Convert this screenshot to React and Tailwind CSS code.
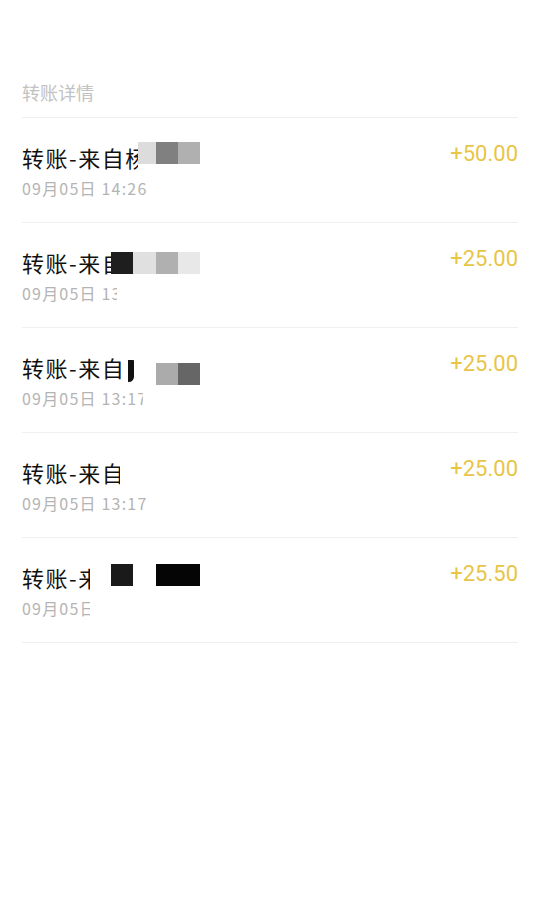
import React from "react";

const rows = [
	{
		title: "转账-来自杨",
		titleW: "w-[116px]",
		date: "09月05日 14:26",
		dateW: "w-[130px]",
		amount: "+50.00",
		mosaicPos: "-top-[4px]",
		mosaic: ["w-[18px] bg-[#dcdcdc]", "w-[22px] bg-[#808080]", "w-[22px] bg-[#b0b0b0]"],
	},
	{
		title: "转账-来自",
		titleW: "w-[89px]",
		date: "09月05日 13:",
		dateW: "w-[95px]",
		amount: "+25.00",
		mosaicPos: "top-[1px]",
		mosaic: [
			"w-[22px] bg-[#1e1e1e]",
			"w-[23px] bg-[#e0e0e0]",
			"w-[22px] bg-[#b0b0b0]",
			"w-[22px] bg-[#e8e8e8]",
		],
	},
	{
		title: "转账-来自",
		titleW: "w-[106px]",
		date: "09月05日 13:17",
		dateW: "w-[121px]",
		amount: "+25.00",
		sliver: true,
		mosaicPos: "top-[7px] ml-[22px]",
		mosaic: ["w-[22px] bg-[#ababab]", "w-[22px] bg-[#666666]"],
	},
	{
		title: "转账-来自",
		titleW: "w-[98px]",
		date: "09月05日 13:17",
		dateW: "w-[130px]",
		amount: "+25.00",
		mosaicPos: "",
		mosaic: [],
	},
	{
		title: "转账-来自",
		titleW: "w-[68px]",
		date: "09月05日",
		dateW: "w-[68px]",
		amount: "+25.50",
		mosaicPos: "-top-[2px]",
		mosaic: ["w-[22px] ml-[21px] bg-[#1a1a1a]", "w-[44px] ml-[23px] bg-[#050505]"],
	},
];

export default function App() {
	return (
		<div className="w-[540px] h-[897px] bg-white px-[22px] font-['Noto_Sans_CJK_SC','Noto_Sans',sans-serif]">
			<div className="pt-[80px] pb-[13px] border-b border-[#efefef] text-[18px] leading-[24px] text-[#c2c2c2]">
				转账详情
			</div>
			{rows.map((row, index) => (
				<div
					key={index}
					className="flex justify-between items-start h-[105px] border-b border-[#efefef] pt-[25px]"
				>
					<div className="flex flex-col">
						<div className="flex items-center h-[28px]">
							<span
								className={`block overflow-hidden whitespace-nowrap text-[22px] leading-[28px] tracking-[1.5px] text-[#111111] ${row.titleW}`}
							>
								{row.title}
							</span>
							{row.sliver && (
								<span className="block w-[6px] h-[22px] mt-[8px] bg-[#111111] rounded-bl-[1px] rounded-br-[6px] rounded-tr-[1px]" />
							)}
							<div className={`flex relative ${row.mosaicPos}`}>
								{row.mosaic.map((m, i) => (
									<span key={i} className={`block h-[22px] ${m}`} />
								))}
							</div>
						</div>
						<span
							className={`block mt-[6px] overflow-hidden whitespace-nowrap text-[16px] leading-[22px] tracking-[1.2px] text-[#b4b4b4] ${row.dateW}`}
						>
							{row.date}
						</span>
					</div>
					<div className="mt-[-2px] text-[22px] leading-[26px] text-[#e8c547] font-['Roboto',sans-serif]">
						{row.amount}
					</div>
				</div>
			))}
		</div>
	);
}
